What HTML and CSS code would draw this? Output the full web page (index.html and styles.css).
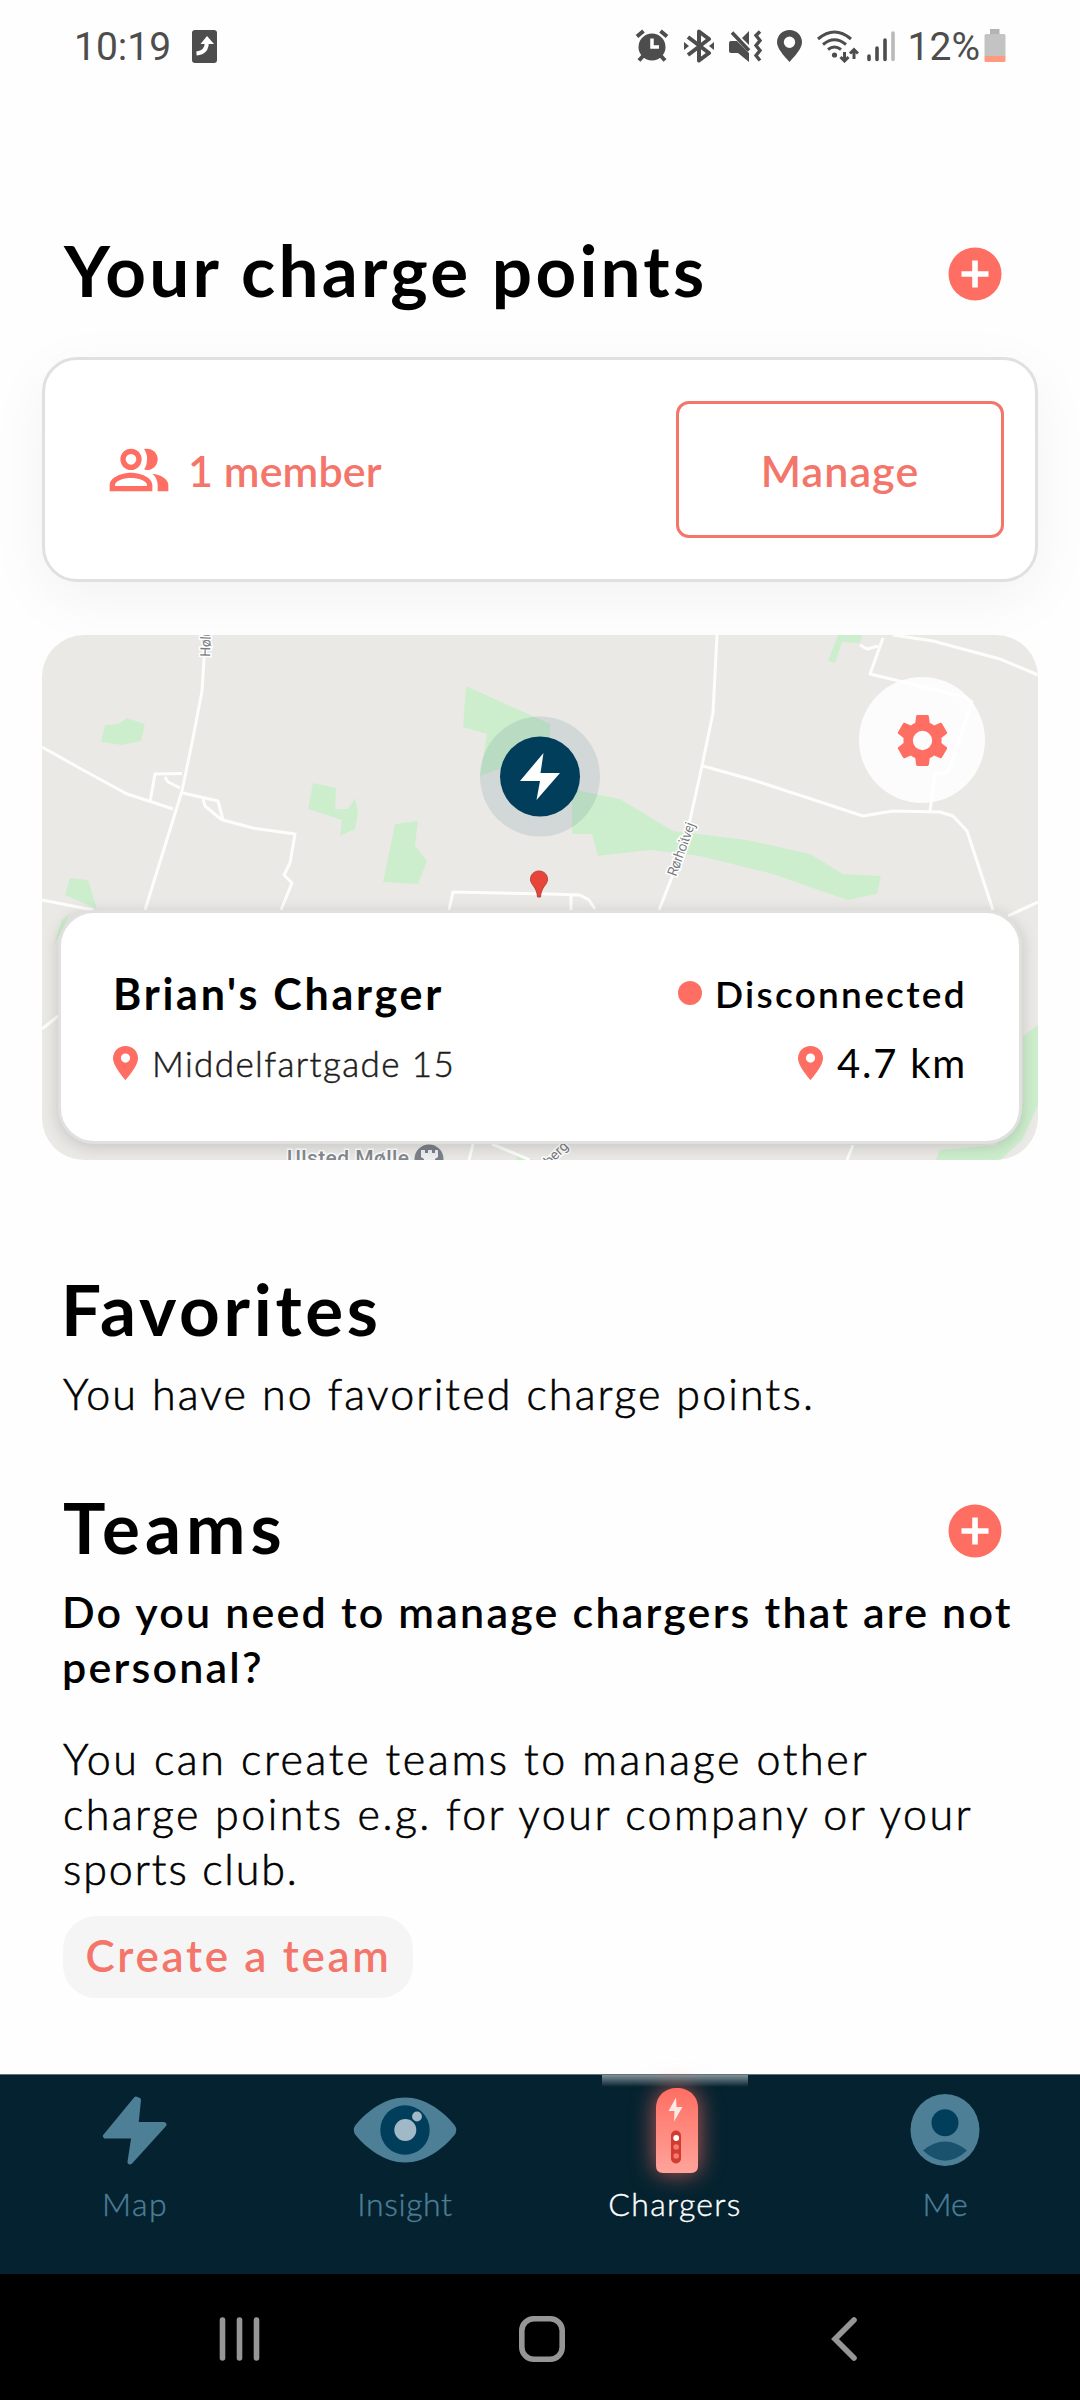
FILE: index.html
```html
<!DOCTYPE html>
<html lang="en">
<head>
<meta charset="utf-8">
<title>Your charge points</title>
<link rel="stylesheet" href="styles.css">
</head>
<body>
<header class="status">
  <span class="clock">10:19</span>
  <svg class="note-icon" width="25" height="33" viewBox="0 0 25 33"><rect width="25" height="33" rx="3" fill="#4d4d4d"/><path d="M4.500 23.500C11 23 15 19 14.800 11.500" fill="none" stroke="#fff" stroke-width="4"/><path d="M8.500 14 15 6l7 8z" fill="#fff"/></svg>
  <div class="status-icons">
    <svg width="34" height="34" viewBox="0 0 34 34"><g fill="none" stroke="#4d4d4d" stroke-width="4"><path d="M2 7.500 8.500 2M25.500 2 32 7.500"/><path d="M8 27l-4 4.500M26 27l4 4.500"/></g><circle cx="17" cy="18" r="13.500" fill="#4d4d4d"/><path d="M17 9.500V18h7" fill="none" stroke="#fff" stroke-width="3.500"/></svg>
    <svg width="30" height="34" viewBox="0 0 30 34"><path d="M4 8l21 16-10 7.500v-29L25 10 4 26" fill="none" stroke="#4d4d4d" stroke-width="4" stroke-linejoin="round"/><path d="M0 13l5 4-5 4zM30 13l-5 4 5 4z" fill="#4d4d4d"/></svg>
    <svg width="33" height="33" viewBox="0 0 33 33"><path d="M0 13q0-2 2-2h6L20 23v9L9 23H2q-2 0-2-2zM20 1v14l-7-7z" fill="#4d4d4d"/><path d="M3 2.500l17 18" stroke="#4d4d4d" stroke-width="3.600"/><path d="M31 1.500l-4 4 4 5-4 5 4 5-4 5 4 5" fill="none" stroke="#4d4d4d" stroke-width="3.400"/></svg>
    <svg width="25" height="32" viewBox="0 0 25 32"><path fill-rule="evenodd" fill="#4d4d4d" d="M12.500 0C5.500 0 0 5.400 0 12.300 0 18 6 25 12.500 32 19 25 25 18 25 12.300 25 5.400 19.500 0 12.500 0zm0 6.500a5.700 5.700 0 1 1 0 11.400 5.700 5.700 0 0 1 0-11.400z"/></svg>
    <svg width="42" height="33" viewBox="0 0 42 33"><g fill="none" stroke="#4d4d4d" stroke-width="3"><path d="M1 9Q17.500-5 34 9"/><path d="M6 14.500q11.500-9.500 23 0"/><path d="M11 19.500q6.500-5 13 0"/><path d="M27.500 22v9M23.500 27l4 4 4-4M37 29v-9M33 23.500l4-4 4 4"/></g><circle cx="17.500" cy="25" r="2.600" fill="#4d4d4d"/></svg>
    <svg class="signal" width="28" height="32" viewBox="0 0 28 32"><g stroke-width="3.600" stroke-linecap="round" stroke="#4d4d4d"><path d="M2 26v3.500M10 18v11.500M18 10v19.500"/><path d="M26 3v26.500" stroke="#b9b9b9"/></g></svg>
  </div>
  <span class="percent">12%</span>
  <svg class="battery" width="22" height="34" viewBox="0 0 22 34"><path d="M6 0h9.500v5H6z" fill="#b3b3b3"/><path d="M2 5h18q1.500 0 1.500 1.500V27h-21V6.500Q.5 5 2 5z" fill="#c3c3c3"/><path d="M.5 27h21v4.500q0 1.500-1.500 1.500H2Q.5 33 .5 31.500z" fill="#ff9a80"/></svg>
</header>

<main class="content">
  <div class="heading heading-points">
    <h1>Your charge points</h1>
    <svg class="add" viewBox="0 0 54 54"><circle cx="27" cy="27" r="26.500" fill="#ff6e62"/><path d="M27 13.500v27M13.500 27h27" stroke="#fff" stroke-width="5.600"/></svg>
  </div>

  <section class="members">
    <svg class="people" viewBox="0 0 24 24" fill="#ff6e62"><path fill-rule="evenodd" d="M9 13c-3 0-8 1.500-8 4.700V20h16v-2.300C17 14.500 12 13 9 13zm-6 5v-.3C3 16 6.200 15 9 15s6 1 6 2.700v.3zM9 12a4 4 0 1 0 0-8 4 4 0 0 0 0 8zm0-6a2 2 0 1 1 0 4 2 2 0 0 1 0-4zM13.900 11.850c.35.100.70.150 1.100.150a4 4 0 0 0 0-8c-.4 0-.75.050-1.100.150A6.200 6.200 0 0 1 15 8c0 1.430-.30 2.750-1.100 3.850zM17 13.400c1.300 1.100 2 2.500 2 4.200V20h4v-2.300c0-2.300-3-4-6-4.300z"/></svg>
    <span class="count">1 member</span>
    <button class="manage">Manage</button>
  </section>

  <section class="charger">
    <svg class="map" viewBox="42 635 996 525">
      <rect x="42" y="635" width="996" height="525" fill="#eae9e6"/>
      <g fill="#cdeecd">
        <path d="M105 725l13-1 9-6 18 6-4 17-19 4-21-3zM313 783l23 5-1 21h13l7-11 3 15-3 16-15 7 2-16-34-11zM395 824l23-3-3 24 12 16-9 23-35-2zM70 878l18 2 9 29-32-14zM62 920l8-7-10 21-7 13z"/>
        <path d="M466 686l84 38v26l-70 26 7-42-24-7zM572 775l8 16 40 8 53 32 74 9 63 14 33 20 38 2-4 18-29 6-41-14-34-12-73-18-50-6-52 6-6-22h-20z"/>
        <path d="M838 635h24l-2 8-18-1-7 21-7-2zM1038 1025l-15 11v67l-27 42-56 5-4 10h64l22-20 16-35zM515 1152l18 8h-16z"/>
      </g>
      <g class="roads">
        <path d="M204 635v24l-2 32-9 47-11 53-9 29-28 90M42 747l41 23 44 24 25 8 21 7M150 802l5-28 27-.5M165 777l3 5 12 6M183 793l35 8 5 19 30 8 42 6-5 29-6 12 8 8-11 27M203 799l2 7 17 14M42 900l51 10M42 1029l16-13M449 910l4-18 97 2 30 1 9 5 6 9M571 896v14"/>
        <path d="M717 635l-4 78-11 53-12 54-18 57-13 33M703 766l50 14 110 36 30-5 47 1 13 4 14 15 26 79M930 811l5-37 13-2 24-70-7-5-95-23 13-36M860 645l7 4 11-3M893 635l40 6 67 18 38 16M1038 902l-30 14M853 1145l-6 15M492 1144l38 16M473 1144l-4 16M546 1160l18-18"/>
      </g>
      <g class="road-names">
        <text transform="translate(210 657) rotate(-88)" textLength="28">Hølu</text>
        <text transform="translate(676 877) rotate(-70)" textLength="56">Rørholtvej</text>
        <text transform="translate(544 1172) rotate(-45)">nberg</text>
      </g>
      <text class="place" x="287" y="1165" textLength="122">Ulsted Mølle</text>
      <circle cx="429" cy="1159" r="14.500" fill="#7c818a"/><path d="M421 1150h4v3h3v-3h4v3h3v-3h3v7l-3 2v9h-11v-9l-3-2z" fill="#eceef0"/>
      <circle cx="540" cy="776.500" r="60" fill="#003e5b" opacity=".1"/>
      <circle cx="540" cy="776.500" r="40" fill="#003e5b"/>
      <path d="M543.500 753 520 781h20l-3.500 19L560 773h-19.500z" fill="#fff"/>
      <path d="M539 871c-5 0-8.500 3.700-8.500 8.300 0 5.700 6.500 7.700 7 17.700h3c.5-10 7-12 7-17.700 0-4.600-3.500-8.300-8.500-8.300z" fill="#e7453a" stroke="#b84238"/>
    </svg>
    <button class="settings" aria-label="Settings">
      <svg viewBox="0 0 24 24"><path fill="#ff6e62" d="M19.430 12.980c.04-.32.070-.64.070-.98s-.03-.66-.07-.98l2.110-1.650c.19-.15.240-.42.120-.64l-2-3.460c-.12-.22-.39-.30-.61-.22l-2.490 1c-.52-.40-1.080-.73-1.690-.98l-.38-2.650A.488.488 0 0 0 14 2h-4c-.25 0-.46.180-.49.420l-.38 2.650c-.61.250-1.170.590-1.690.98l-2.490-1c-.23-.09-.49 0-.61.220l-2 3.460c-.13.220-.07.490.120.640l2.110 1.650c-.04.320-.07.650-.07.980s.03.660.070.980l-2.110 1.650c-.19.150-.24.420-.12.640l2 3.460c.12.220.390.300.610.220l2.490-1c.52.400 1.080.730 1.690.98l.38 2.650c.03.240.240.420.490.420h4c.25 0 .46-.18.490-.42l.38-2.650c.61-.25 1.170-.59 1.690-.98l2.490 1c.23.090.490 0 .61-.22l2-3.460c.12-.22.070-.49-.12-.64l-2.110-1.650zM12 15.800a3.800 3.800 0 1 1 0-7.600 3.800 3.800 0 0 1 0 7.600z"/></svg>
    </button>
    <div class="info">
      <div class="row">
        <span class="name">Brian's Charger</span>
        <span class="state"><i class="dot"></i>Disconnected</span>
      </div>
      <div class="row">
        <span class="address"><svg class="pin" viewBox="0 0 25 34"><path fill-rule="evenodd" fill="#ff6e62" d="M12.500 0C5.500 0 0 5.300 0 12.200 0 20.500 12.500 34 12.500 34S25 20.500 25 12.200C25 5.300 19.500 0 12.500 0zm0 7.500a4.600 4.600 0 1 1 0 9.200 4.600 4.600 0 0 1 0-9.200z"/></svg>Middelfartgade 15</span>
        <span class="distance"><svg class="pin" viewBox="0 0 25 34"><path fill-rule="evenodd" fill="#ff6e62" d="M12.500 0C5.500 0 0 5.300 0 12.200 0 20.500 12.500 34 12.500 34S25 20.500 25 12.200C25 5.300 19.500 0 12.500 0zm0 7.500a4.600 4.600 0 1 1 0 9.200 4.600 4.600 0 0 1 0-9.200z"/></svg>4.7 km</span>
      </div>
    </div>
  </section>

  <div class="heading heading-favorites"><h2 class="favorites">Favorites</h2></div>
  <p class="body empty">You have no favorited charge points.</p>

  <div class="heading heading-teams">
    <h2 class="teams">Teams</h2>
    <svg class="add" viewBox="0 0 54 54"><circle cx="27" cy="27" r="26.500" fill="#ff6e62"/><path d="M27 13.500v27M13.500 27h27" stroke="#fff" stroke-width="5.600"/></svg>
  </div>
  <p class="lead">Do you need to manage chargers that are not<br>personal?</p>
  <p class="body about"><span class="first">You can create teams to manage other</span><br>charge points e.g. for your company or your<br><span class="last">sports club.</span></p>
  <button class="create">Create a team</button>
</main>

<nav class="tabs">
  <a class="tab">
    <svg width="66" height="70" viewBox="0 0 66 70"><path d="M34 4 3.500 41h28.500L28 67 62 29.500H34L36.500 5z" fill="#4d7f97" stroke="#4d7f97" stroke-width="5" stroke-linejoin="round"/></svg>
    <span class="t-map">Map</span>
  </a>
  <a class="tab">
    <svg width="104" height="70" viewBox="0 0 104 70"><path d="M2.500 30C14 16 32 2.500 52 2.500S90 16 101.500 30q3.500 5 0 10C90 54 72 67.500 52 67.500S14 54 2.500 40q-3.500-5 0-10z" fill="#4d7f97"/><circle cx="52" cy="35" r="24.700" fill="#003e5b"/><circle cx="52.300" cy="35" r="11" fill="#a1b9c6"/><circle cx="64" cy="21.500" r="4.900" fill="#a1b9c6"/></svg>
    <span class="t-insight">Insight</span>
  </a>
  <a class="tab active">
    <svg class="box" width="42" height="86" viewBox="0 0 42 86"><defs><linearGradient id="shell" x2="0" y2="1"><stop stop-color="#ff6e62"/><stop offset="1" stop-color="#ffa49b"/></linearGradient></defs><path d="M0 20C0 8 9 0 21 0s21 8 21 20v58q0 7-7 7H7q-7 0-7-7z" fill="url(#shell)"/><path d="M20 9.500 12.500 23h6l-.5 10.500L26.500 19h-6z" fill="#ffe9e6"/><rect x="15" y="42.500" width="10" height="33" rx="5" fill="#d23b2f"/><circle cx="20.200" cy="50" r="2.900" fill="#fff"/><circle cx="20.200" cy="59" r="2.800" fill="#f77b70"/><circle cx="20.200" cy="68" r="2.800" fill="#f77b70"/></svg>
    <span class="t-chargers">Chargers</span>
  </a>
  <a class="tab">
    <svg width="70" height="72" viewBox="0 0 70 72"><ellipse cx="35" cy="36" rx="34.500" ry="36" fill="#4d7f97"/><circle cx="35" cy="28.700" r="13.500" fill="#003e5b"/><path d="M13 56.500q22-18 44 0Q35 77 13 56.500z" fill="#1a526d"/></svg>
    <span class="t-me">Me</span>
  </a>
</nav>
<footer class="system">
  <svg width="42" height="44" viewBox="0 0 42 44"><path d="M3.500 3v38M20.500 3v38M37.500 3v38" class="sys"/></svg>
  <svg class="home" width="46" height="46" viewBox="0 0 46 46"><rect x="2.800" y="2.800" width="40.400" height="40.400" rx="12" class="sys"/></svg>
  <svg width="26" height="44" viewBox="0 0 26 44"><path d="M23 3 4 22l19 19" class="sys"/></svg>
</footer>
</body>
</html>
```
FILE: styles.css
```css
* { box-sizing: border-box; }
body { margin: 0; width: 1080px; height: 2400px; display: flex; flex-direction: column; background: #fefefe; color: #000; font-family: Lato, "Open Sans", sans-serif; overflow: hidden; }
h1, h2, p { margin: 0; }
button { border: 0; padding: 0; background: none; font: inherit; color: #f4756a; display: flex; align-items: center; justify-content: center; }
svg { flex: none; display: block; }

.status { height: 92px; flex: none; display: flex; align-items: center; padding: 0 74px 0 74px; font: 400 39px/46px Roboto, sans-serif; color: #4d4d4d; }
.clock { width: 118px; padding-top: 2px; }
.status-icons { display: flex; align-items: center; gap: 15px; margin-left: auto; }
.status-icons .signal { margin-left: -7px; }
.percent { margin-left: 13px; padding-top: 2px; }
.battery { margin-left: 4px; }

.content { flex: none; height: 1982px; padding: 0 42px; display: flex; flex-direction: column; }
.heading { display: flex; justify-content: space-between; align-items: center; height: 84px; padding: 0 36px 0 22px; font-size: 71px; line-height: 82px; flex: none; }
.heading h1, .heading h2 { font-size: inherit; font-weight: 700; margin-top: 0; }
.heading h1 { letter-spacing: 3.2px; }
.heading .add { width: 54px; height: 54px; margin-top: 7px; }
.heading-points { margin-top: 136px; }
.heading-favorites { margin-top: 107px; padding-left: 19px; }
.favorites { letter-spacing: 3.7px; }
.heading-teams { padding-left: 21px; }
.teams { letter-spacing: 5px; }

.members { height: 225px; flex: none; margin-top: 45px; display: flex; align-items: center; padding: 0 31px 0 62px; border: 3px solid #e0e0e0; border-radius: 35px; background: #fff; box-shadow: 0 16px 60px rgba(0, 0, 0, .05); }
.people { width: 64px; height: 64px; }
.count { font-size: 43px; font-weight: 600; letter-spacing: .1px; color: #f4756a; margin-left: 17px; padding-top: 1px; }
.manage { width: 328px; height: 137px; margin-left: auto; border: 3px solid #f4756a; border-radius: 13px; font-size: 43px; font-weight: 600; letter-spacing: 1.1px; padding-top: 1px; }

.charger { height: 525px; flex: none; margin-top: 53px; position: relative; border-radius: 42px; overflow: hidden; display: flex; flex-direction: column; justify-content: flex-end; padding: 0 16px 16px; }
.map { position: absolute; inset: 0; width: 996px; height: 525px; }
.roads path { fill: none; stroke: #fdfdfb; stroke-width: 3; stroke-linejoin: round; }
.road-names text { font: 14px Roboto, sans-serif; fill: #777b7e; stroke: #fff; stroke-width: 3; paint-order: stroke; }
.place { font: 500 21px Roboto, sans-serif; fill: #85898f; stroke: #fff; stroke-width: 3; paint-order: stroke; }
.settings { position: absolute; right: 53px; top: 42px; width: 126px; height: 126px; border-radius: 50%; background: rgba(255, 255, 255, .86); }
.settings svg { width: 61px; height: 61px; }
.info { position: relative; height: 234px; border: 3px solid #e0e0df; border-radius: 36px; background: #fff; box-shadow: 0 3px 16px rgba(0, 0, 0, .16); padding: 50px 54px 0 52px; }
.row { display: flex; justify-content: space-between; align-items: center; height: 60px; }
.row + .row { height: 79px; }
.name { font-size: 43px; font-weight: 700; letter-spacing: 2.75px; }
.state { font-size: 37px; font-weight: 600; letter-spacing: 2.3px; margin-right: -2px; display: flex; align-items: center; }
.dot { width: 24px; height: 24px; border-radius: 50%; background: #ff6e62; margin-right: 13px; }
.address, .distance { display: flex; align-items: center; }
.address { font-size: 35px; font-weight: 300; letter-spacing: 1.4px; color: #1c1c1c; -webkit-text-stroke: .5px #1c1c1c; }
.distance { font-size: 40px; font-weight: 400; letter-spacing: 1.8px; margin-right: -2px; }
.pin { width: 25px; height: 34px; margin-right: 14px; }

.body { font-size: 43px; font-weight: 300; line-height: 55px; letter-spacing: 2.15px; padding-left: 21px; -webkit-text-stroke: .6px #000; white-space: nowrap; }
.empty { margin-top: 15px; }
.empty + .heading { margin-top: 64px; }
.lead { margin-top: 15px; font-size: 43px; font-weight: 600; line-height: 55px; letter-spacing: 2.2px; padding-left: 20px; white-space: nowrap; }
.about { margin-top: 37px; letter-spacing: 2.45px; }
.first { letter-spacing: 2.65px; }
.last { letter-spacing: 1.9px; }
.create { width: 350px; height: 82px; margin: 20px 0 0 21px; border-radius: 33px; background: #f5f5f5; font-size: 44px; font-weight: 600; letter-spacing: 2.7px; padding: 0 0 4px 1px; }

.tabs { height: 200px; flex: none; display: flex; background: #04222f; border-top: 1px solid #5b7681; color: #4d7e96; }
.tab { flex: 1; display: flex; flex-direction: column; align-items: center; font-size: 32px; font-weight: 300; line-height: 40px; padding-top: 20px; }
.tab svg { margin-bottom: 16px; }
.tab span { -webkit-text-stroke: .4px currentColor; padding-top: 3px; }
.tab:last-child svg { margin: -1px 0 15px; }
.t-map { letter-spacing: 1.5px; }
.t-insight { letter-spacing: .6px; }
.t-chargers { letter-spacing: 1.3px; }
.active { color: #fff; padding-top: 13px; background: linear-gradient(rgba(255, 255, 255, .5), rgba(255, 255, 255, 0)) center top / 146px 12px no-repeat; }
.active .box { margin: 0 0 7px 4px; filter: drop-shadow(0 0 12px rgba(255, 110, 98, .75)); overflow: visible; }

.system { height: 126px; flex: none; background: #000; display: flex; justify-content: space-between; align-items: center; padding: 3px 223px 0 219px; }
.home { margin-right: 8px; }
.sys { fill: none; stroke: #969696; stroke-width: 5.6; stroke-linecap: round; stroke-linejoin: miter; }
```
